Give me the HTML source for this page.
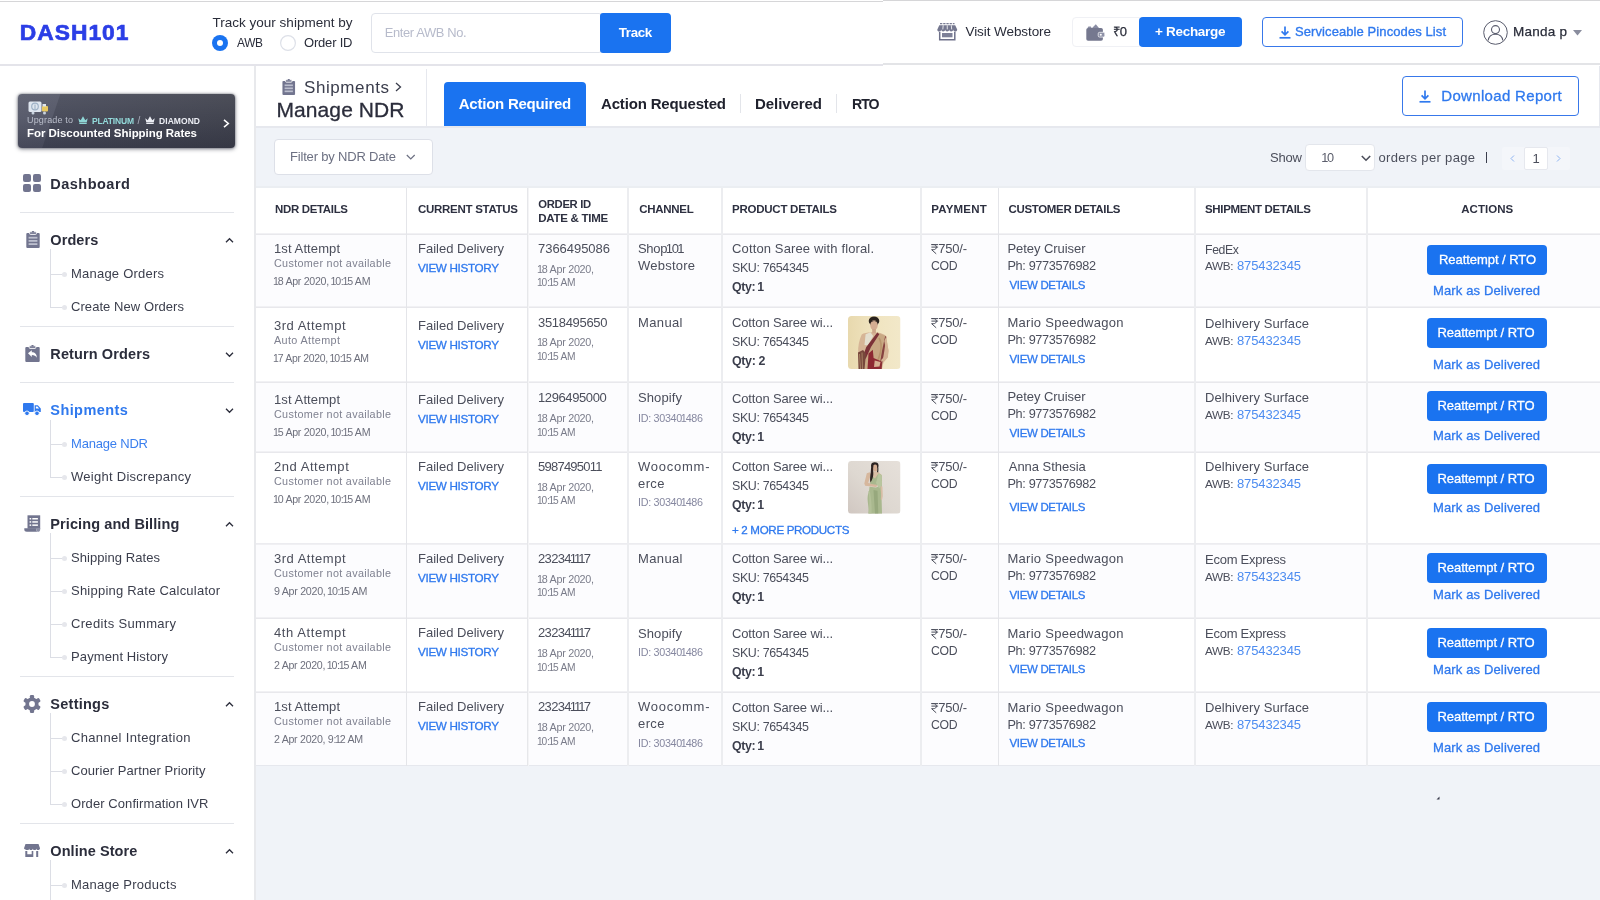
<!DOCTYPE html>
<html><head><meta charset="utf-8"><title>Dash101 - Manage NDR</title>
<style>
*{margin:0;padding:0;box-sizing:border-box}
html,body{width:1600px;height:900px;overflow:hidden;background:#fff;font-family:"Liberation Sans",sans-serif;}
#root{will-change:transform;position:relative;width:1600px;height:900px;overflow:hidden;background:#fff}
.t{position:absolute;white-space:nowrap;display:block}
.b{position:absolute}
.t i{font-style:normal;margin:0 -.08em 0 -.1em}
svg{position:absolute;overflow:visible}
</style></head><body><div id="root">
<div class="b" style="left:256px;top:127px;width:1344px;height:773px;background:#f0f3f8;"></div>
<div class="b" style="left:256px;top:66px;width:1344px;height:60px;background:#fff;"></div>
<div class="b" style="left:256px;top:126px;width:1344px;height:2px;background:#e6e8ee;"></div>
<div class="b" style="left:254px;top:66px;width:2px;height:834px;background:#e8e9ec;"></div>
<div class="b" style="left:1599px;top:66px;width:1px;height:61px;background:#e6e8ee;"></div>
<div class="b" style="left:0px;top:1px;width:883px;height:1px;background:#d6d6d8;"></div>
<div class="b" style="left:883px;top:0px;width:717px;height:1px;background:#d6d6d8;"></div>
<div class="b" style="left:0px;top:64px;width:883px;height:2px;background:#e4e4ea;"></div>
<div class="b" style="left:883px;top:63px;width:717px;height:2px;background:#e3e4e7;"></div>
<span class="t" style="left:19.80px;top:19.30px;font-size:22.8px;line-height:27px;color:#2b3ee6;font-weight:700;letter-spacing:1.009px;-webkit-text-stroke:0.7px #2b3ee6;">DASH101</span>
<span class="t" style="left:212.50px;top:14.80px;font-size:13.5px;line-height:16px;color:#2a2d3a;letter-spacing:0.009px;">Track your shipment by</span>
<svg style="left:212px;top:35px" width="16" height="16"><circle cx="8" cy="8" r="8" fill="#1a73f0"/><circle cx="8" cy="8" r="3" fill="#fff"/></svg>
<svg style="left:280px;top:35px" width="16" height="16"><circle cx="8" cy="8" r="7.4" fill="#fff" stroke="#dde0e8" stroke-width="1.2"/></svg>
<span class="t" style="left:237.00px;top:34.80px;font-size:11.9px;line-height:16px;color:#2a2d3a;letter-spacing:-0.333px;">AWB</span>
<span class="t" style="left:304.00px;top:34.80px;font-size:13px;line-height:16px;color:#2a2d3a;letter-spacing:-0.192px;">Order ID</span>
<div class="b" style="left:371px;top:13px;width:232px;height:40px;background:#fff;border:1px solid #e0e3ea;border-radius:4px;"></div>
<span class="t" style="left:384.70px;top:24.80px;font-size:12.91px;line-height:16px;color:#b7bbcb;letter-spacing:-0.361px;">Enter AWB No.</span>
<div class="b" style="left:600px;top:13px;width:71px;height:40px;background:#1a73f0;border-radius:3px 4px 4px 3px;"></div>
<span class="t" style="left:618.75px;top:24.60px;font-size:13.39px;line-height:16px;color:#fff;font-weight:700;letter-spacing:-0.373px;">Track</span>
<svg style="left:937px;top:22.500px" width="20.500" height="17.500" viewBox="0 0 20.500 17.500">
<path d="M3 0.700h14.500" stroke="#7a7d94" stroke-width="1.200" stroke-dasharray="2.300 .9"/>
<path d="M2.300 2.300h15.900l2 4.100c0 1.300-.9 2.100-2 2.100s-2-.8-2-2c0 1.200-.9 2-2 2s-2-.8-2-2c0 1.200-.9 2-2 2s-2-.8-2-2c0 1.200-.9 2-2 2s-2-.8-2-2c0 1.200-.9 2-2 2S.3 7.700.3 6.400z" fill="#74778f"/>
<path d="M6.200 2.300l-.4 4.100M10.250 2.300v4.100M14.300 2.300l.4 4.100" stroke="#fff" stroke-width=".8"/>
<path d="M2.700 8.800v7.900h15.100V8.800" fill="none" stroke="#6e718a" stroke-width="1.500"/>
<rect x="5" y="10" width="10.500" height="4.300" fill="#7d8097"/>
</svg>
<span class="t" style="left:965.50px;top:23.80px;font-size:13.5px;line-height:16px;color:#2a2d3a;letter-spacing:-0.080px;">Visit Webstore</span>
<div class="b" style="left:1072px;top:17px;width:68px;height:30px;background:#fff;border:1px solid #f0f1f5;border-radius:4px 0 0 4px;"></div>
<svg style="left:1085.500px;top:23.500px" width="19" height="17" viewBox="0 0 19 17">
<path d="M1.200 4.600l1.200-2h2.400l1 1.600L9.800 0.300l3.600 4.300z" fill="#8a8da4"/>
<rect x="0.300" y="3.900" width="16.600" height="12.800" rx="1.800" fill="#75788f"/>
<rect x="12.200" y="8.300" width="6.600" height="4.800" rx="1.400" fill="#8f92a8" stroke="#fff" stroke-width=".7"/>
<circle cx="14.800" cy="10.700" r="1" fill="#fff"/>
</svg>
<span class="t" style="left:1113.00px;top:23.80px;font-size:13px;line-height:16px;color:#2a2d3a;-webkit-text-stroke:0.25px #2a2d3a;letter-spacing:-.3px;">₹0</span>
<div class="b" style="left:1139px;top:17px;width:103px;height:30px;background:#1a73f0;border-radius:4px;"></div>
<span class="t" style="left:1155.00px;top:23.60px;font-size:13.5px;line-height:16px;color:#fff;font-weight:700;letter-spacing:-0.296px;">+ Recharge</span>
<div class="b" style="left:1262px;top:17px;width:201px;height:30px;background:#fff;border:1.5px solid #3878ea;border-radius:4px;"></div>
<svg style="left:1279px;top:25.500px" width="12" height="13" viewBox="0 0 12 13"><path d="M6 0.500v8M2.600 5.400L6 8.800l3.400-3.400" fill="none" stroke="#2f79ee" stroke-width="1.700"/><path d="M0.500 11.800h11" stroke="#2f79ee" stroke-width="1.700"/></svg>
<span class="t" style="left:1295.00px;top:23.60px;font-size:13px;line-height:16px;color:#2f79ee;letter-spacing:0.089px;-webkit-text-stroke:0.35px #2f79ee;">Serviceable Pincodes List</span>
<svg style="left:1482.500px;top:19.500px" width="25" height="25" viewBox="0 0 25 25">
<circle cx="12.500" cy="12.500" r="11.800" fill="#fff" stroke="#5a5d6e" stroke-width="1"/>
<circle cx="12.500" cy="9.600" r="4" fill="none" stroke="#5a5d6e" stroke-width="1.100"/>
<path d="M5.200 20.500c.5-4.200 3.500-6.300 7.300-6.300s6.800 2.100 7.300 6.300" fill="none" stroke="#5a5d6e" stroke-width="1.100"/>
</svg>
<span class="t" style="left:1513.00px;top:24.30px;font-size:13.5px;line-height:16px;color:#2a2d3a;letter-spacing:0.244px;-webkit-text-stroke:0.25px #2a2d3a;">Manda p</span>
<svg style="left:1572.500px;top:29.500px" width="9" height="6"><path d="M0 0h9L4.500 5.500z" fill="#8a8d9e"/></svg>
<div class="b" style="left:17.5px;top:94px;width:217.5px;height:53.5px;border-radius:4px;background:linear-gradient(108.600deg,#5a5d6d 0%,#575a6a 17.800%,#4a4d5c 18.200%,#42444f 100%);box-shadow:0 1px 4px rgba(30,32,50,.55),0 0 2px rgba(30,32,50,.5);"></div>
<div class="b" style="left:17.5px;top:94px;width:217.5px;height:53.5px;border-radius:4px;background:linear-gradient(180deg,rgba(255,255,255,.05) 0%,rgba(0,0,0,0) 45%,rgba(20,22,40,.28) 100%);"></div>
<svg style="left:27.500px;top:101px" width="21" height="14" viewBox="0 0 21 14">
<rect x="0.500" y="0.500" width="13" height="10.500" rx="1.500" fill="#dfe6ef"/>
<circle cx="7" cy="5.500" r="3.300" fill="none" stroke="#9fb2c6" stroke-width="1.200"/>
<path d="M7 3.500v4.500" stroke="#9fb2c6" stroke-width="1.100"/>
<rect x="14" y="5" width="6" height="5.500" rx="1" fill="#e8c860"/>
<rect x="14.500" y="3" width="3.500" height="2.500" fill="#dfe6ef"/>
<circle cx="5" cy="12" r="1.500" fill="#c9d3df"/><circle cx="16.500" cy="12" r="1.500" fill="#c9d3df"/>
</svg>
<span class="t" style="left:27.00px;top:115.10px;font-size:9px;line-height:11px;color:#b9bdca;letter-spacing:0.163px;">Upgrade to</span>
<svg style="left:78px;top:116px" width="10" height="8" viewBox="0 0 10 8"><path d="M0.300 2.200l2.400 2L5 0.300l2.300 3.900 2.400-2L8.700 6.500H1.300z" fill="#8fd6d6"/><rect x="1.300" y="7" width="7.400" height="1" fill="#8fd6d6"/></svg>
<span class="t" style="left:92.00px;top:115.80px;font-size:8.5px;line-height:10px;color:#93dada;font-weight:700;letter-spacing:-0.183px;">PLATINUM</span>
<span class="t" style="left:137.50px;top:114.50px;font-size:10px;line-height:12px;color:#a9adbb;">/</span>
<svg style="left:145px;top:116px" width="10" height="8" viewBox="0 0 10 8"><path d="M0.300 2.200l2.400 2L5 0.300l2.300 3.900 2.400-2L8.700 6.500H1.300z" fill="#eceef4"/><rect x="1.300" y="7" width="7.400" height="1" fill="#eceef4"/></svg>
<span class="t" style="left:159.00px;top:115.80px;font-size:8.5px;line-height:10px;color:#eceef4;font-weight:700;letter-spacing:0.065px;">DIAMOND</span>
<span class="t" style="left:27.00px;top:126.30px;font-size:11.5px;line-height:14px;color:#fff;font-weight:700;letter-spacing:-0.044px;">For Discounted Shipping Rates</span>
<svg style="left:223px;top:118.500px" width="7" height="9" viewBox="0 0 7 9"><path d="M1 0.800L5.300 4.500 1 8.200" fill="none" stroke="#fff" stroke-width="1.600"/></svg>
<svg style="left:23px;top:174px" width="18" height="18" viewBox="0 0 18 18"><rect x="0" y="0" width="8" height="8" rx="2" fill="#72758f"/><rect x="10" y="0" width="8" height="8" rx="2" fill="#72758f"/><rect x="0" y="10" width="8" height="8" rx="2" fill="#72758f"/><rect x="10" y="10" width="8" height="8" rx="2" fill="#72758f"/></svg>
<span class="t" style="left:50.30px;top:175.50px;font-size:14.5px;line-height:17px;color:#2b2d3b;font-weight:700;letter-spacing:0.483px;">Dashboard</span>
<div class="b" style="left:20px;top:212px;width:214px;height:1px;background:#e3e5ea;"></div>
<svg style="left:25.500px;top:231px" width="14" height="17" viewBox="0 0 14 17">
<rect x="0.300" y="2" width="13.400" height="15" rx="1" fill="#72758f"/>
<rect x="3.600" y="0.800" width="6.800" height="2.600" rx=".8" fill="#72758f" stroke="#fff" stroke-width=".9"/>
<rect x="5.800" y="0" width="2.400" height="1.500" rx=".7" fill="#72758f"/>
<rect x="2.600" y="5.800" width="8.800" height="1.800" fill="#bcbfce"/><rect x="2.600" y="9" width="8.800" height="1.800" fill="#bcbfce"/><rect x="2.600" y="12.200" width="8.800" height="1.800" fill="#bcbfce"/>
</svg>
<span class="t" style="left:50.30px;top:231.50px;font-size:14.5px;line-height:17px;color:#2b2d3b;font-weight:700;letter-spacing:0.090px;">Orders</span>
<svg style="left:224.700px;top:236.5px" width="9" height="7" viewBox="0 0 8.600 7"><path d="M0.800 5.200L4.300 1.700 7.800 5.200" fill="none" stroke="#2b2d3b" stroke-width="1.300"/></svg>
<div class="b" style="left:50px;top:249px;width:1px;height:58px;background:#dcdee5;"></div>
<div class="b" style="left:50px;top:273.5px;width:12px;height:1px;background:#dcdee5;"></div>
<div class="b" style="left:62px;top:271.5px;width:5px;height:5px;background:#e6e7ec;border-radius:50%;"></div>
<div class="b" style="left:50px;top:306.5px;width:12px;height:1px;background:#dcdee5;"></div>
<div class="b" style="left:62px;top:304.5px;width:5px;height:5px;background:#e6e7ec;border-radius:50%;"></div>
<span class="t" style="left:71.00px;top:266.00px;font-size:13px;line-height:16px;color:#3b3e4c;letter-spacing:0.223px;">Manage Orders</span>
<span class="t" style="left:71.00px;top:299.00px;font-size:13px;line-height:16px;color:#3b3e4c;letter-spacing:0.064px;">Create New Orders</span>
<div class="b" style="left:20px;top:326px;width:214px;height:1px;background:#e3e5ea;"></div>
<svg style="left:25px;top:345px" width="15" height="17" viewBox="0 0 15 17">
<rect x="0.300" y="2" width="14.400" height="15" rx="1" fill="#72758f"/>
<rect x="4.200" y="0.800" width="6.600" height="2.600" rx=".8" fill="#72758f" stroke="#fff" stroke-width=".9"/>
<rect x="6.300" y="0" width="2.400" height="1.500" rx=".7" fill="#72758f"/>
<path d="M3 8.300L6.800 5.200v2c3.300 0 5 1.800 5 5.600-1-2.100-2.500-2.900-5-2.900v2z" fill="#fff"/>
</svg>
<span class="t" style="left:50.30px;top:345.50px;font-size:14.5px;line-height:17px;color:#2b2d3b;font-weight:700;letter-spacing:0.117px;">Return Orders</span>
<svg style="left:224.700px;top:350.5px" width="9" height="7" viewBox="0 0 8.600 7"><path d="M0.800 1.800L4.300 5.300 7.800 1.800" fill="none" stroke="#2b2d3b" stroke-width="1.300"/></svg>
<div class="b" style="left:20px;top:382px;width:214px;height:1px;background:#e3e5ea;"></div>
<svg style="left:23px;top:403px" width="18" height="13" viewBox="0 0 18 13">
<rect x="0" y="0" width="10.800" height="9" rx="1" fill="#2f79ee"/>
<path d="M11.600 2.200h3.200l3 3.300v3.500h-6.200z" fill="#2f79ee"/>
<path d="M12.900 3.400h1.500l1.700 2h-3.200z" fill="#fff"/>
<circle cx="4" cy="10.300" r="2.300" fill="#2f79ee" stroke="#fff" stroke-width=".9"/>
<circle cx="14" cy="10.300" r="2.300" fill="#2f79ee" stroke="#fff" stroke-width=".9"/>
</svg>
<span class="t" style="left:50.30px;top:401.50px;font-size:14.5px;line-height:17px;color:#2f79ee;font-weight:700;letter-spacing:0.422px;">Shipments</span>
<svg style="left:224.700px;top:406.5px" width="9" height="7" viewBox="0 0 8.600 7"><path d="M0.800 1.800L4.300 5.300 7.800 1.800" fill="none" stroke="#2b2d3b" stroke-width="1.300"/></svg>
<div class="b" style="left:50px;top:420px;width:1px;height:57px;background:#dcdee5;"></div>
<div class="b" style="left:50px;top:443.5px;width:12px;height:1px;background:#dcdee5;"></div>
<div class="b" style="left:62px;top:441.5px;width:5px;height:5px;background:#e6e7ec;border-radius:50%;"></div>
<div class="b" style="left:50px;top:476.5px;width:12px;height:1px;background:#dcdee5;"></div>
<div class="b" style="left:62px;top:474.5px;width:5px;height:5px;background:#e6e7ec;border-radius:50%;"></div>
<span class="t" style="left:71.00px;top:436.00px;font-size:13px;line-height:16px;color:#3a7fee;letter-spacing:-0.195px;">Manage NDR</span>
<span class="t" style="left:71.00px;top:469.00px;font-size:13px;line-height:16px;color:#3b3e4c;letter-spacing:0.273px;">Weight Discrepancy</span>
<div class="b" style="left:20px;top:496px;width:214px;height:1px;background:#e3e5ea;"></div>
<svg style="left:23.500px;top:515px" width="17" height="17" viewBox="0 0 17 17">
<path d="M3.500 0.300h12.700v13.400H3.500z" fill="#72758f"/>
<path d="M0.300 13.200h12v1.500c0 1.200.7 2 1.700 2H2.800c-1.500 0-2.500-1-2.500-2.300z" fill="#72758f"/>
<path d="M12.300 13.200v1.500c0 1.200.7 2 1.700 2 1.200 0 2.200-.9 2.200-2.300V13" fill="#8b8ea5"/>
<rect x="5.600" y="3" width="1.600" height="1.500" fill="#fff"/><rect x="8.300" y="3" width="5.600" height="1.500" fill="#fff"/>
<rect x="5.600" y="6.200" width="1.600" height="1.500" fill="#fff"/><rect x="8.300" y="6.200" width="5.600" height="1.500" fill="#fff"/>
<rect x="5.600" y="9.400" width="1.600" height="1.500" fill="#fff"/><rect x="8.300" y="9.400" width="5.600" height="1.500" fill="#fff"/>
</svg>
<span class="t" style="left:50.30px;top:515.50px;font-size:14.5px;line-height:17px;color:#2b2d3b;font-weight:700;letter-spacing:0.095px;">Pricing and Billing</span>
<svg style="left:224.700px;top:520.5px" width="9" height="7" viewBox="0 0 8.600 7"><path d="M0.800 5.200L4.300 1.700 7.800 5.200" fill="none" stroke="#2b2d3b" stroke-width="1.300"/></svg>
<div class="b" style="left:50px;top:533px;width:1px;height:124px;background:#dcdee5;"></div>
<div class="b" style="left:50px;top:557.5px;width:12px;height:1px;background:#dcdee5;"></div>
<div class="b" style="left:62px;top:555.5px;width:5px;height:5px;background:#e6e7ec;border-radius:50%;"></div>
<div class="b" style="left:50px;top:590.5px;width:12px;height:1px;background:#dcdee5;"></div>
<div class="b" style="left:62px;top:588.5px;width:5px;height:5px;background:#e6e7ec;border-radius:50%;"></div>
<div class="b" style="left:50px;top:623.5px;width:12px;height:1px;background:#dcdee5;"></div>
<div class="b" style="left:62px;top:621.5px;width:5px;height:5px;background:#e6e7ec;border-radius:50%;"></div>
<div class="b" style="left:50px;top:656.5px;width:12px;height:1px;background:#dcdee5;"></div>
<div class="b" style="left:62px;top:654.5px;width:5px;height:5px;background:#e6e7ec;border-radius:50%;"></div>
<span class="t" style="left:71.00px;top:550.00px;font-size:13px;line-height:16px;color:#3b3e4c;letter-spacing:0.064px;">Shipping Rates</span>
<span class="t" style="left:71.00px;top:583.00px;font-size:13px;line-height:16px;color:#3b3e4c;letter-spacing:0.226px;">Shipping Rate Calculator</span>
<span class="t" style="left:71.00px;top:616.00px;font-size:13px;line-height:16px;color:#3b3e4c;letter-spacing:0.328px;">Credits Summary</span>
<span class="t" style="left:71.00px;top:649.00px;font-size:13px;line-height:16px;color:#3b3e4c;letter-spacing:0.117px;">Payment History</span>
<div class="b" style="left:20px;top:676px;width:214px;height:1px;background:#e3e5ea;"></div>
<svg style="left:22.500px;top:694.500px" width="18" height="18" viewBox="0 0 18 18">
<g fill="#72758f"><circle cx="9" cy="9" r="6.600"/>
<g id="tooth"><rect x="6.900" y="0" width="4.200" height="18" rx="1.200"/></g>
<rect x="6.900" y="0" width="4.200" height="18" rx="1.200" transform="rotate(60 9 9)"/>
<rect x="6.900" y="0" width="4.200" height="18" rx="1.200" transform="rotate(120 9 9)"/></g>
<circle cx="9" cy="9" r="2.900" fill="#fff"/></svg>
<span class="t" style="left:50.30px;top:695.50px;font-size:14.5px;line-height:17px;color:#2b2d3b;font-weight:700;letter-spacing:0.257px;">Settings</span>
<svg style="left:224.700px;top:700.5px" width="9" height="7" viewBox="0 0 8.600 7"><path d="M0.800 5.200L4.300 1.700 7.800 5.200" fill="none" stroke="#2b2d3b" stroke-width="1.300"/></svg>
<div class="b" style="left:50px;top:713px;width:1px;height:91px;background:#dcdee5;"></div>
<div class="b" style="left:50px;top:737.5px;width:12px;height:1px;background:#dcdee5;"></div>
<div class="b" style="left:62px;top:735.5px;width:5px;height:5px;background:#e6e7ec;border-radius:50%;"></div>
<div class="b" style="left:50px;top:770.5px;width:12px;height:1px;background:#dcdee5;"></div>
<div class="b" style="left:62px;top:768.5px;width:5px;height:5px;background:#e6e7ec;border-radius:50%;"></div>
<div class="b" style="left:50px;top:803.5px;width:12px;height:1px;background:#dcdee5;"></div>
<div class="b" style="left:62px;top:801.5px;width:5px;height:5px;background:#e6e7ec;border-radius:50%;"></div>
<span class="t" style="left:71.00px;top:730.00px;font-size:13px;line-height:16px;color:#3b3e4c;letter-spacing:0.335px;">Channel Integration</span>
<span class="t" style="left:71.00px;top:763.00px;font-size:13px;line-height:16px;color:#3b3e4c;letter-spacing:0.068px;">Courier Partner Priority</span>
<span class="t" style="left:71.00px;top:796.00px;font-size:13px;line-height:16px;color:#3b3e4c;letter-spacing:0.080px;">Order Confirmation IVR</span>
<div class="b" style="left:20px;top:823px;width:214px;height:1px;background:#e3e5ea;"></div>
<svg style="left:24px;top:843.500px" width="16" height="13" viewBox="0 0 16 13">
<path d="M1.500 0h13l1.500 4.300c0 1.100-.8 1.800-1.800 1.800s-1.800-.7-1.800-1.700c0 1-.8 1.700-1.800 1.700S8.800 5.400 8.800 4.400c0 1-.8 1.700-1.800 1.700s-1.800-.7-1.800-1.700c0 1-.8 1.700-1.800 1.700S0 5.400 0 4.300z" fill="#72758f"/>
<path d="M1.300 7h2v3.300h4.400V7h1.600v6H1.300zM12.200 7h2v6h-2z" fill="#72758f"/>
</svg>
<span class="t" style="left:50.30px;top:842.50px;font-size:14.5px;line-height:17px;color:#2b2d3b;font-weight:700;letter-spacing:0.072px;">Online Store</span>
<svg style="left:224.700px;top:847.5px" width="9" height="7" viewBox="0 0 8.600 7"><path d="M0.800 5.200L4.300 1.700 7.800 5.200" fill="none" stroke="#2b2d3b" stroke-width="1.300"/></svg>
<div class="b" style="left:50px;top:860px;width:1px;height:60.5px;background:#dcdee5;"></div>
<div class="b" style="left:50px;top:884.5px;width:12px;height:1px;background:#dcdee5;"></div>
<div class="b" style="left:62px;top:882.5px;width:5px;height:5px;background:#e6e7ec;border-radius:50%;"></div>
<div class="b" style="left:50px;top:920px;width:12px;height:1px;background:#dcdee5;"></div>
<div class="b" style="left:62px;top:918px;width:5px;height:5px;background:#e6e7ec;border-radius:50%;"></div>
<span class="t" style="left:71.00px;top:877.00px;font-size:13px;line-height:16px;color:#3b3e4c;letter-spacing:0.250px;">Manage Products</span>
<svg style="left:281.500px;top:78.500px" width="13.500" height="16" viewBox="0 0 14 17">
<rect x="0.300" y="2" width="13.400" height="15" rx="1" fill="#72758f"/>
<rect x="3.600" y="0.800" width="6.800" height="2.600" rx=".8" fill="#72758f" stroke="#fff" stroke-width=".9"/>
<rect x="5.800" y="0" width="2.400" height="1.500" rx=".7" fill="#72758f"/>
<rect x="2.600" y="5.800" width="8.800" height="1.800" fill="#bcbfce"/><rect x="2.600" y="9" width="8.800" height="1.800" fill="#bcbfce"/><rect x="2.600" y="12.200" width="8.800" height="1.800" fill="#bcbfce"/>
</svg>
<span class="t" style="left:304.00px;top:77.50px;font-size:17px;line-height:20px;color:#3a3d4c;letter-spacing:0.585px;">Shipments</span>
<svg style="left:395px;top:81.500px" width="7" height="10" viewBox="0 0 7 10"><path d="M1 1l4.500 4L1 9" fill="none" stroke="#3a3d4c" stroke-width="1.300"/></svg>
<span class="t" style="left:276.50px;top:97.30px;font-size:21px;line-height:25px;color:#2b2d3b;letter-spacing:0.086px;-webkit-text-stroke:0.3px #2b2d3b;">Manage NDR</span>
<div class="b" style="left:426px;top:69px;width:1px;height:57px;background:#e6e8ee;"></div>
<div class="b" style="left:444px;top:82px;width:142px;height:44px;background:#1a73f0;border-radius:4px 4px 0 0;"></div>
<span class="t" style="left:458.75px;top:95.20px;font-size:15px;line-height:18px;color:#fff;font-weight:700;letter-spacing:-0.239px;">Action Required</span>
<span class="t" style="left:601.00px;top:95.20px;font-size:15px;line-height:18px;color:#20222e;font-weight:700;letter-spacing:-0.168px;">Action Requested</span>
<div class="b" style="left:740px;top:94px;width:1px;height:19px;background:#e3e5ea;"></div>
<span class="t" style="left:755.00px;top:95.20px;font-size:15px;line-height:18px;color:#20222e;font-weight:700;letter-spacing:-0.067px;">Delivered</span>
<div class="b" style="left:836px;top:94px;width:1px;height:19px;background:#e3e5ea;"></div>
<span class="t" style="left:852.00px;top:95.20px;font-size:14.13px;line-height:18px;color:#20222e;font-weight:700;letter-spacing:-1.036px;">RTO</span>
<div class="b" style="left:1402px;top:76px;width:177px;height:40px;background:#fff;border:1.500px solid #3878ea;border-radius:4px;"></div>
<svg style="left:1419px;top:89.500px" width="12" height="13" viewBox="0 0 12 13"><path d="M6 0.500v8M2.600 5.400L6 8.800l3.400-3.400" fill="none" stroke="#2f79ee" stroke-width="1.700"/><path d="M0.500 11.800h11" stroke="#2f79ee" stroke-width="1.700"/></svg>
<span class="t" style="left:1441.25px;top:87.20px;font-size:15px;line-height:18px;color:#2f79ee;letter-spacing:0.328px;-webkit-text-stroke:0.3px #2f79ee;">Download Report</span>
<div class="b" style="left:274px;top:139px;width:159px;height:36px;background:#fff;border:1px solid #dde0e8;border-radius:4px;"></div>
<span class="t" style="left:290.00px;top:149.00px;font-size:13px;line-height:16px;color:#6c7082;letter-spacing:-0.181px;">Filter by NDR Date</span>
<svg style="left:405.500px;top:153.500px" width="9.500" height="7" viewBox="0 0 9.500 7"><path d="M0.800 1L4.750 5 8.700 1" fill="none" stroke="#6c7082" stroke-width="1.200"/></svg>
<span class="t" style="left:1270.00px;top:150.00px;font-size:13px;line-height:16px;color:#4b4e5b;letter-spacing:-0.173px;">Show</span>
<div class="b" style="left:1305px;top:144px;width:70px;height:27px;background:#fff;border:1px solid #e3e6ec;border-radius:4px;"></div>
<span class="t" style="left:1322.50px;top:150.20px;font-size:12.72px;line-height:16px;color:#5b5e6c;letter-spacing:-0.359px;"><i>1</i>0</span>
<svg style="left:1361px;top:154.500px" width="10" height="7" viewBox="0 0 10 7"><path d="M0.800 1L5 5.200 9.200 1" fill="none" stroke="#4b4e5b" stroke-width="1.600"/></svg>
<span class="t" style="left:1378.50px;top:150.00px;font-size:13px;line-height:16px;color:#4b4e5b;letter-spacing:0.337px;">orders per page</span>
<div class="b" style="left:1486px;top:152px;width:1px;height:11px;background:#3a3d4c;"></div>
<div class="b" style="left:1502px;top:147px;width:68px;height:22.5px;background:#f4f6fa;border-radius:2px;"></div>
<div class="b" style="left:1524px;top:147px;width:24px;height:22.5px;background:#fff;border:1px solid #e6e8ee;border-radius:2px;"></div>
<svg style="left:1510px;top:154.500px" width="5" height="7" viewBox="0 0 5 7"><path d="M4 0.500L1 3.500l3 3" fill="none" stroke="#8db4f3" stroke-width="1"/></svg>
<svg style="left:1556px;top:154.500px" width="5" height="7" viewBox="0 0 5 7"><path d="M1 0.500l3 3-3 3" fill="none" stroke="#8db4f3" stroke-width="1"/></svg>
<span class="t" style="left:1536.00px;top:151.00px;font-size:13px;line-height:16px;color:#4b4e5b;transform:translateX(-50%);">1</span>
<div class="b" style="left:256px;top:188px;width:1344px;height:578px;background:#fff;"></div>
<div class="b" style="left:256px;top:234px;width:1344px;height:73px;background:#fcfcfe;"></div>
<div class="b" style="left:256px;top:382px;width:1344px;height:70px;background:#fcfcfe;"></div>
<div class="b" style="left:256px;top:543.5px;width:1344px;height:74.5px;background:#fcfcfe;"></div>
<div class="b" style="left:256px;top:692px;width:1344px;height:73.5px;background:#fcfcfe;"></div>
<div class="b" style="left:256px;top:186px;width:1344px;height:2px;background:#ebeef2;"></div>
<div class="b" style="left:256px;top:233px;width:1344px;height:1px;background:#f1f1f4;"></div>
<div class="b" style="left:256px;top:234px;width:1344px;height:1px;background:#e8e8ec;"></div>
<div class="b" style="left:256px;top:306px;width:1344px;height:1px;background:#f1f1f4;"></div>
<div class="b" style="left:256px;top:307px;width:1344px;height:1px;background:#e8e8ec;"></div>
<div class="b" style="left:256px;top:381px;width:1344px;height:1px;background:#f1f1f4;"></div>
<div class="b" style="left:256px;top:382px;width:1344px;height:1px;background:#e8e8ec;"></div>
<div class="b" style="left:256px;top:451px;width:1344px;height:1px;background:#f1f1f4;"></div>
<div class="b" style="left:256px;top:452px;width:1344px;height:1px;background:#e8e8ec;"></div>
<div class="b" style="left:256px;top:543px;width:1344px;height:1px;background:#ececf0;"></div>
<div class="b" style="left:256px;top:544px;width:1344px;height:1px;background:#f0f0f3;"></div>
<div class="b" style="left:256px;top:617px;width:1344px;height:1px;background:#f1f1f4;"></div>
<div class="b" style="left:256px;top:618px;width:1344px;height:1px;background:#e8e8ec;"></div>
<div class="b" style="left:256px;top:691px;width:1344px;height:1px;background:#f1f1f4;"></div>
<div class="b" style="left:256px;top:692px;width:1344px;height:1px;background:#e8e8ec;"></div>
<div class="b" style="left:256px;top:765px;width:1344px;height:1px;background:#e6e8ee;"></div>
<div class="b" style="left:406px;top:188px;width:1px;height:578px;background:#e4e5e9;"></div>
<div class="b" style="left:998px;top:188px;width:1px;height:578px;background:#e4e5e9;"></div>
<div class="b" style="left:527px;top:188px;width:1px;height:578px;background:#e6e7ea;"></div>
<div class="b" style="left:528px;top:188px;width:1px;height:578px;background:#f4f4f6;"></div>
<div class="b" style="left:627px;top:188px;width:2px;height:578px;background:#ecedf0;"></div>
<div class="b" style="left:721px;top:188px;width:2px;height:578px;background:#ecedf0;"></div>
<div class="b" style="left:920px;top:188px;width:2px;height:578px;background:#ecedf0;"></div>
<div class="b" style="left:1194px;top:188px;width:2px;height:578px;background:#ecedf0;"></div>
<div class="b" style="left:1366px;top:188px;width:2px;height:578px;background:#ecedf0;"></div>
<span class="t" style="left:275.00px;top:202.00px;font-size:11.46px;line-height:14px;color:#2d3040;font-weight:700;letter-spacing:-0.319px;">NDR DETAILS</span>
<span class="t" style="left:418.00px;top:202.00px;font-size:11.5px;line-height:14px;color:#2d3040;font-weight:700;letter-spacing:-0.285px;">CURRENT STATUS</span>
<span class="t" style="left:538.25px;top:196.75px;font-size:11.29px;line-height:14px;color:#2d3040;font-weight:700;letter-spacing:-0.314px;">ORDER ID</span>
<span class="t" style="left:538.25px;top:210.50px;font-size:11.5px;line-height:14px;color:#2d3040;font-weight:700;letter-spacing:-0.262px;">DATE &amp; TIME</span>
<span class="t" style="left:639.25px;top:202.00px;font-size:11.5px;line-height:14px;color:#2d3040;font-weight:700;letter-spacing:-0.287px;">CHANNEL</span>
<span class="t" style="left:732.00px;top:202.00px;font-size:11.5px;line-height:14px;color:#2d3040;font-weight:700;letter-spacing:-0.243px;">PRODUCT DETAILS</span>
<span class="t" style="left:931.25px;top:202.00px;font-size:11.5px;line-height:14px;color:#2d3040;font-weight:700;letter-spacing:0.197px;">PAYMENT</span>
<span class="t" style="left:1008.50px;top:202.00px;font-size:11.47px;line-height:14px;color:#2d3040;font-weight:700;letter-spacing:-0.322px;">CUSTOMER DETAILS</span>
<span class="t" style="left:1205.00px;top:202.00px;font-size:11.49px;line-height:14px;color:#2d3040;font-weight:700;letter-spacing:-0.324px;">SHIPMENT DETAILS</span>
<span class="t" style="left:1461.25px;top:202.00px;font-size:11.5px;line-height:14px;color:#2d3040;font-weight:700;letter-spacing:0.042px;">ACTIONS</span>
<span class="t" style="left:274.00px;top:240.75px;font-size:13px;line-height:16px;color:#4b4e5b;letter-spacing:0.097px;">1st Attempt</span>
<span class="t" style="left:274.00px;top:257.25px;font-size:10.8px;line-height:13px;color:#7f8190;letter-spacing:0.311px;">Customer not available</span>
<span class="t" style="left:274.00px;top:275.25px;font-size:10.63px;line-height:13px;color:#6e707d;letter-spacing:-0.296px;"><i>1</i>8 Apr 2020, <i>1</i>0:<i>1</i>5 AM</span>
<span class="t" style="left:418.00px;top:240.75px;font-size:13px;line-height:16px;color:#4b4e5b;">Failed Delivery</span>
<span class="t" style="left:418.00px;top:260.50px;font-size:11.68px;line-height:14px;color:#2f79ee;letter-spacing:-0.326px;-webkit-text-stroke:0.3px #2f79ee;">VIEW HISTORY</span>
<span class="t" style="left:538.00px;top:240.75px;font-size:13px;line-height:16px;color:#4b4e5b;letter-spacing:-0.034px;">7366495086</span>
<span class="t" style="left:538.00px;top:262.50px;font-size:10.8px;line-height:13px;color:#7a7c8a;letter-spacing:-0.301px;"><i>1</i>8 Apr 2020,</span>
<span class="t" style="left:538.00px;top:276.25px;font-size:10.22px;line-height:13px;color:#7a7c8a;letter-spacing:-0.286px;"><i>1</i>0:<i>1</i>5 AM</span>
<span class="t" style="left:638.00px;top:240.75px;font-size:13px;line-height:16px;color:#4b4e5b;letter-spacing:-0.312px;">Shop<i>1</i>0<i>1</i></span>
<span class="t" style="left:638.00px;top:257.50px;font-size:13px;line-height:16px;color:#4b4e5b;letter-spacing:0.229px;">Webstore</span>
<span class="t" style="left:732.00px;top:240.75px;font-size:13px;line-height:16px;color:#4b4e5b;letter-spacing:0.136px;">Cotton Saree with floral.</span>
<span class="t" style="left:732.00px;top:259.50px;font-size:12.43px;line-height:16px;color:#4b4e5b;letter-spacing:-0.351px;">SKU: 7654345</span>
<span class="t" style="left:732.00px;top:278.75px;font-size:12.33px;line-height:16px;color:#3b3e4c;font-weight:700;letter-spacing:-0.345px;">Qty: <i>1</i></span>
<svg style="left:931px;top:243.85px" width="7.500" height="10" viewBox="0 0 7.500 10"><path d="M0.400 0.600h6.700M0.400 3.100h6.700M0.400 0.600h1.800c2.200 0 3.200 1 3.200 2.500s-1 2.600-3.200 2.600H0.600L5.200 9.800" fill="none" stroke="#4b4e5b" stroke-width="1" stroke-linejoin="round"/></svg>
<span class="t" style="left:938.30px;top:240.75px;font-size:13px;line-height:16px;color:#4b4e5b;letter-spacing:-0.233px;">750/-</span>
<span class="t" style="left:931.00px;top:257.50px;font-size:12.23px;line-height:16px;color:#4b4e5b;letter-spacing:-0.339px;">COD</span>
<span class="t" style="left:1007.50px;top:240.75px;font-size:13px;line-height:16px;color:#4b4e5b;letter-spacing:-0.063px;">Petey Cruiser</span>
<span class="t" style="left:1007.50px;top:257.50px;font-size:12.69px;line-height:16px;color:#4b4e5b;letter-spacing:-0.358px;">Ph: 9773576982</span>
<span class="t" style="left:1009.50px;top:277.50px;font-size:11.48px;line-height:14px;color:#2f79ee;letter-spacing:-0.321px;-webkit-text-stroke:0.3px #2f79ee;">VIEW DETAILS</span>
<span class="t" style="left:1205.00px;top:241.50px;font-size:12.24px;line-height:16px;color:#4b4e5b;letter-spacing:-0.344px;">FedEx</span>
<span class="t" style="left:1205.00px;top:258.25px;font-size:11.71px;line-height:16px;color:#4b4e5b;letter-spacing:-0.331px;">AWB:</span>
<span class="t" style="left:1237.00px;top:258.25px;font-size:13px;line-height:16px;color:#4d8cf0;letter-spacing:-0.134px;">875432345</span>
<div class="b" style="left:1427px;top:245px;width:120px;height:29.8px;background:#1a73f0;border-radius:4px;"></div>
<span class="t" style="left:1439.00px;top:251.80px;font-size:13px;line-height:16px;color:#fff;letter-spacing:-0.056px;-webkit-text-stroke:0.3px #fff;">Reattempt / RTO</span>
<span class="t" style="left:1433.00px;top:282.50px;font-size:13px;line-height:16px;color:#2f79ee;letter-spacing:0.140px;-webkit-text-stroke:0.3px #2f79ee;">Mark as Delivered</span>
<span class="t" style="left:274.00px;top:317.75px;font-size:13px;line-height:16px;color:#4b4e5b;letter-spacing:0.502px;">3rd Attempt</span>
<span class="t" style="left:274.00px;top:334.00px;font-size:10.8px;line-height:13px;color:#7f8190;letter-spacing:0.378px;">Auto Attempt</span>
<span class="t" style="left:274.00px;top:352.00px;font-size:10.47px;line-height:13px;color:#6e707d;letter-spacing:-0.294px;"><i>1</i>7 Apr 2020, <i>1</i>0:<i>1</i>5 AM</span>
<span class="t" style="left:418.00px;top:317.75px;font-size:13px;line-height:16px;color:#4b4e5b;">Failed Delivery</span>
<span class="t" style="left:418.00px;top:337.50px;font-size:11.68px;line-height:14px;color:#2f79ee;letter-spacing:-0.326px;-webkit-text-stroke:0.3px #2f79ee;">VIEW HISTORY</span>
<span class="t" style="left:538.00px;top:314.50px;font-size:13px;line-height:16px;color:#4b4e5b;letter-spacing:-0.311px;">3518495650</span>
<span class="t" style="left:538.00px;top:336.25px;font-size:10.8px;line-height:13px;color:#7a7c8a;letter-spacing:-0.301px;"><i>1</i>8 Apr 2020,</span>
<span class="t" style="left:538.00px;top:350.00px;font-size:10.22px;line-height:13px;color:#7a7c8a;letter-spacing:-0.286px;"><i>1</i>0:<i>1</i>5 AM</span>
<span class="t" style="left:638.00px;top:314.50px;font-size:13px;line-height:16px;color:#4b4e5b;letter-spacing:0.372px;">Manual</span>
<span class="t" style="left:732.00px;top:314.50px;font-size:13px;line-height:16px;color:#4b4e5b;letter-spacing:-0.137px;">Cotton Saree wi...</span>
<span class="t" style="left:732.00px;top:333.75px;font-size:12.43px;line-height:16px;color:#4b4e5b;letter-spacing:-0.351px;">SKU: 7654345</span>
<span class="t" style="left:732.00px;top:352.75px;font-size:12.43px;line-height:16px;color:#3b3e4c;font-weight:700;letter-spacing:-0.345px;">Qty: 2</span>
<svg style="left:931px;top:317.6px" width="7.500" height="10" viewBox="0 0 7.500 10"><path d="M0.400 0.600h6.700M0.400 3.100h6.700M0.400 0.600h1.800c2.200 0 3.200 1 3.200 2.500s-1 2.600-3.200 2.600H0.600L5.200 9.800" fill="none" stroke="#4b4e5b" stroke-width="1" stroke-linejoin="round"/></svg>
<span class="t" style="left:938.30px;top:314.50px;font-size:13px;line-height:16px;color:#4b4e5b;letter-spacing:-0.233px;">750/-</span>
<span class="t" style="left:931.00px;top:331.50px;font-size:12.23px;line-height:16px;color:#4b4e5b;letter-spacing:-0.339px;">COD</span>
<span class="t" style="left:1007.50px;top:314.50px;font-size:13px;line-height:16px;color:#4b4e5b;letter-spacing:0.265px;">Mario Speedwagon</span>
<span class="t" style="left:1007.50px;top:331.50px;font-size:12.69px;line-height:16px;color:#4b4e5b;letter-spacing:-0.358px;">Ph: 9773576982</span>
<span class="t" style="left:1009.50px;top:351.50px;font-size:11.48px;line-height:14px;color:#2f79ee;letter-spacing:-0.321px;-webkit-text-stroke:0.3px #2f79ee;">VIEW DETAILS</span>
<span class="t" style="left:1205.00px;top:315.75px;font-size:13px;line-height:16px;color:#4b4e5b;letter-spacing:0.087px;">Delhivery Surface</span>
<span class="t" style="left:1205.00px;top:332.50px;font-size:11.71px;line-height:16px;color:#4b4e5b;letter-spacing:-0.331px;">AWB:</span>
<span class="t" style="left:1237.00px;top:332.50px;font-size:13px;line-height:16px;color:#4d8cf0;letter-spacing:-0.134px;">875432345</span>
<div class="b" style="left:1427px;top:318px;width:120px;height:29.8px;background:#1a73f0;border-radius:4px;"></div>
<span class="t" style="left:1437.50px;top:324.80px;font-size:13px;line-height:16px;color:#fff;letter-spacing:-0.056px;-webkit-text-stroke:0.3px #fff;">Reattempt / RTO</span>
<span class="t" style="left:1433.00px;top:356.50px;font-size:13px;line-height:16px;color:#2f79ee;letter-spacing:0.140px;-webkit-text-stroke:0.3px #2f79ee;">Mark as Delivered</span>
<span class="t" style="left:274.00px;top:391.50px;font-size:13px;line-height:16px;color:#4b4e5b;letter-spacing:0.097px;">1st Attempt</span>
<span class="t" style="left:274.00px;top:407.50px;font-size:10.8px;line-height:13px;color:#7f8190;letter-spacing:0.311px;">Customer not available</span>
<span class="t" style="left:274.00px;top:426.00px;font-size:10.63px;line-height:13px;color:#6e707d;letter-spacing:-0.296px;"><i>1</i>5 Apr 2020, <i>1</i>0:<i>1</i>5 AM</span>
<span class="t" style="left:418.00px;top:391.50px;font-size:13px;line-height:16px;color:#4b4e5b;">Failed Delivery</span>
<span class="t" style="left:418.00px;top:411.50px;font-size:11.68px;line-height:14px;color:#2f79ee;letter-spacing:-0.326px;-webkit-text-stroke:0.3px #2f79ee;">VIEW HISTORY</span>
<span class="t" style="left:538.00px;top:389.50px;font-size:13px;line-height:16px;color:#4b4e5b;letter-spacing:-0.395px;">1296495000</span>
<span class="t" style="left:538.00px;top:412.00px;font-size:10.8px;line-height:13px;color:#7a7c8a;letter-spacing:-0.301px;"><i>1</i>8 Apr 2020,</span>
<span class="t" style="left:538.00px;top:426.00px;font-size:10.22px;line-height:13px;color:#7a7c8a;letter-spacing:-0.286px;"><i>1</i>0:<i>1</i>5 AM</span>
<span class="t" style="left:638.00px;top:389.50px;font-size:13px;line-height:16px;color:#4b4e5b;letter-spacing:0.106px;">Shopify</span>
<span class="t" style="left:638.00px;top:411.75px;font-size:10.75px;line-height:13px;color:#8688a0;letter-spacing:-0.300px;">ID: 30340<i>1</i>486</span>
<span class="t" style="left:732.00px;top:390.75px;font-size:13px;line-height:16px;color:#4b4e5b;letter-spacing:-0.137px;">Cotton Saree wi...</span>
<span class="t" style="left:732.00px;top:409.50px;font-size:12.43px;line-height:16px;color:#4b4e5b;letter-spacing:-0.351px;">SKU: 7654345</span>
<span class="t" style="left:732.00px;top:428.75px;font-size:12.33px;line-height:16px;color:#3b3e4c;font-weight:700;letter-spacing:-0.345px;">Qty: <i>1</i></span>
<svg style="left:931px;top:393.6px" width="7.500" height="10" viewBox="0 0 7.500 10"><path d="M0.400 0.600h6.700M0.400 3.100h6.700M0.400 0.600h1.800c2.200 0 3.200 1 3.200 2.500s-1 2.600-3.200 2.600H0.600L5.200 9.800" fill="none" stroke="#4b4e5b" stroke-width="1" stroke-linejoin="round"/></svg>
<span class="t" style="left:938.30px;top:390.50px;font-size:13px;line-height:16px;color:#4b4e5b;letter-spacing:-0.233px;">750/-</span>
<span class="t" style="left:931.00px;top:407.50px;font-size:12.23px;line-height:16px;color:#4b4e5b;letter-spacing:-0.339px;">COD</span>
<span class="t" style="left:1007.50px;top:388.75px;font-size:13px;line-height:16px;color:#4b4e5b;letter-spacing:-0.063px;">Petey Cruiser</span>
<span class="t" style="left:1007.50px;top:405.75px;font-size:12.69px;line-height:16px;color:#4b4e5b;letter-spacing:-0.358px;">Ph: 9773576982</span>
<span class="t" style="left:1009.50px;top:425.50px;font-size:11.48px;line-height:14px;color:#2f79ee;letter-spacing:-0.321px;-webkit-text-stroke:0.3px #2f79ee;">VIEW DETAILS</span>
<span class="t" style="left:1205.00px;top:389.50px;font-size:13px;line-height:16px;color:#4b4e5b;letter-spacing:0.087px;">Delhivery Surface</span>
<span class="t" style="left:1205.00px;top:406.50px;font-size:11.71px;line-height:16px;color:#4b4e5b;letter-spacing:-0.331px;">AWB:</span>
<span class="t" style="left:1237.00px;top:406.50px;font-size:13px;line-height:16px;color:#4d8cf0;letter-spacing:-0.134px;">875432345</span>
<div class="b" style="left:1427px;top:391px;width:120px;height:29.8px;background:#1a73f0;border-radius:4px;"></div>
<span class="t" style="left:1437.50px;top:397.80px;font-size:13px;line-height:16px;color:#fff;letter-spacing:-0.056px;-webkit-text-stroke:0.3px #fff;">Reattempt / RTO</span>
<span class="t" style="left:1433.00px;top:427.50px;font-size:13px;line-height:16px;color:#2f79ee;letter-spacing:0.140px;-webkit-text-stroke:0.3px #2f79ee;">Mark as Delivered</span>
<span class="t" style="left:274.00px;top:458.75px;font-size:13px;line-height:16px;color:#4b4e5b;letter-spacing:0.537px;">2nd Attempt</span>
<span class="t" style="left:274.00px;top:475.00px;font-size:10.8px;line-height:13px;color:#7f8190;letter-spacing:0.311px;">Customer not available</span>
<span class="t" style="left:274.00px;top:493.00px;font-size:10.63px;line-height:13px;color:#6e707d;letter-spacing:-0.296px;"><i>1</i>0 Apr 2020, <i>1</i>0:<i>1</i>5 AM</span>
<span class="t" style="left:418.00px;top:458.75px;font-size:13px;line-height:16px;color:#4b4e5b;">Failed Delivery</span>
<span class="t" style="left:418.00px;top:478.50px;font-size:11.68px;line-height:14px;color:#2f79ee;letter-spacing:-0.326px;-webkit-text-stroke:0.3px #2f79ee;">VIEW HISTORY</span>
<span class="t" style="left:538.00px;top:458.75px;font-size:13px;line-height:16px;color:#4b4e5b;letter-spacing:-0.760px;">5987495011</span>
<span class="t" style="left:538.00px;top:480.50px;font-size:10.8px;line-height:13px;color:#7a7c8a;letter-spacing:-0.301px;"><i>1</i>8 Apr 2020,</span>
<span class="t" style="left:538.00px;top:494.25px;font-size:10.22px;line-height:13px;color:#7a7c8a;letter-spacing:-0.286px;"><i>1</i>0:<i>1</i>5 AM</span>
<span class="t" style="left:638.00px;top:458.75px;font-size:13px;line-height:16px;color:#4b4e5b;letter-spacing:0.755px;">Woocomm-</span>
<span class="t" style="left:638.00px;top:475.75px;font-size:13px;line-height:16px;color:#4b4e5b;letter-spacing:0.403px;">erce</span>
<span class="t" style="left:638.00px;top:496.00px;font-size:10.75px;line-height:13px;color:#8688a0;letter-spacing:-0.300px;">ID: 30340<i>1</i>486</span>
<span class="t" style="left:732.00px;top:458.75px;font-size:13px;line-height:16px;color:#4b4e5b;letter-spacing:-0.137px;">Cotton Saree wi...</span>
<span class="t" style="left:732.00px;top:477.75px;font-size:12.43px;line-height:16px;color:#4b4e5b;letter-spacing:-0.351px;">SKU: 7654345</span>
<span class="t" style="left:732.00px;top:497.00px;font-size:12.33px;line-height:16px;color:#3b3e4c;font-weight:700;letter-spacing:-0.345px;">Qty: <i>1</i></span>
<svg style="left:931px;top:461.85px" width="7.500" height="10" viewBox="0 0 7.500 10"><path d="M0.400 0.600h6.700M0.400 3.100h6.700M0.400 0.600h1.800c2.200 0 3.200 1 3.200 2.500s-1 2.600-3.200 2.600H0.600L5.200 9.800" fill="none" stroke="#4b4e5b" stroke-width="1" stroke-linejoin="round"/></svg>
<span class="t" style="left:938.30px;top:458.75px;font-size:13px;line-height:16px;color:#4b4e5b;letter-spacing:-0.233px;">750/-</span>
<span class="t" style="left:931.00px;top:475.75px;font-size:12.23px;line-height:16px;color:#4b4e5b;letter-spacing:-0.339px;">COD</span>
<span class="t" style="left:1008.75px;top:458.75px;font-size:13px;line-height:16px;color:#4b4e5b;letter-spacing:-0.031px;">Anna Sthesia</span>
<span class="t" style="left:1007.50px;top:475.75px;font-size:12.69px;line-height:16px;color:#4b4e5b;letter-spacing:-0.358px;">Ph: 9773576982</span>
<span class="t" style="left:1009.50px;top:499.75px;font-size:11.48px;line-height:14px;color:#2f79ee;letter-spacing:-0.321px;-webkit-text-stroke:0.3px #2f79ee;">VIEW DETAILS</span>
<span class="t" style="left:1205.00px;top:458.75px;font-size:13px;line-height:16px;color:#4b4e5b;letter-spacing:0.087px;">Delhivery Surface</span>
<span class="t" style="left:1205.00px;top:475.75px;font-size:11.71px;line-height:16px;color:#4b4e5b;letter-spacing:-0.331px;">AWB:</span>
<span class="t" style="left:1237.00px;top:475.75px;font-size:13px;line-height:16px;color:#4d8cf0;letter-spacing:-0.134px;">875432345</span>
<div class="b" style="left:1427px;top:464px;width:120px;height:29.8px;background:#1a73f0;border-radius:4px;"></div>
<span class="t" style="left:1437.50px;top:470.80px;font-size:13px;line-height:16px;color:#fff;letter-spacing:-0.056px;-webkit-text-stroke:0.3px #fff;">Reattempt / RTO</span>
<span class="t" style="left:1433.00px;top:499.50px;font-size:13px;line-height:16px;color:#2f79ee;letter-spacing:0.140px;-webkit-text-stroke:0.3px #2f79ee;">Mark as Delivered</span>
<span class="t" style="left:732.00px;top:522.50px;font-size:11.59px;line-height:14px;color:#2f79ee;letter-spacing:-0.324px;-webkit-text-stroke:0.3px #2f79ee;">+ 2 MORE PRODUCTS</span>
<span class="t" style="left:274.00px;top:550.75px;font-size:13px;line-height:16px;color:#4b4e5b;letter-spacing:0.502px;">3rd Attempt</span>
<span class="t" style="left:274.00px;top:567.00px;font-size:10.8px;line-height:13px;color:#7f8190;letter-spacing:0.311px;">Customer not available</span>
<span class="t" style="left:274.00px;top:585.00px;font-size:10.71px;line-height:13px;color:#6e707d;letter-spacing:-0.298px;">9 Apr 2020, <i>1</i>0:<i>1</i>5 AM</span>
<span class="t" style="left:418.00px;top:550.75px;font-size:13px;line-height:16px;color:#4b4e5b;">Failed Delivery</span>
<span class="t" style="left:418.00px;top:570.50px;font-size:11.68px;line-height:14px;color:#2f79ee;letter-spacing:-0.326px;-webkit-text-stroke:0.3px #2f79ee;">VIEW HISTORY</span>
<span class="t" style="left:538.00px;top:550.75px;font-size:13px;line-height:16px;color:#4b4e5b;letter-spacing:-0.640px;">23234<i>1</i><i>1</i><i>1</i>7</span>
<span class="t" style="left:538.00px;top:572.50px;font-size:10.8px;line-height:13px;color:#7a7c8a;letter-spacing:-0.301px;"><i>1</i>8 Apr 2020,</span>
<span class="t" style="left:538.00px;top:586.25px;font-size:10.22px;line-height:13px;color:#7a7c8a;letter-spacing:-0.286px;"><i>1</i>0:<i>1</i>5 AM</span>
<span class="t" style="left:638.00px;top:550.75px;font-size:13px;line-height:16px;color:#4b4e5b;letter-spacing:0.372px;">Manual</span>
<span class="t" style="left:732.00px;top:550.75px;font-size:13px;line-height:16px;color:#4b4e5b;letter-spacing:-0.137px;">Cotton Saree wi...</span>
<span class="t" style="left:732.00px;top:569.50px;font-size:12.43px;line-height:16px;color:#4b4e5b;letter-spacing:-0.351px;">SKU: 7654345</span>
<span class="t" style="left:732.00px;top:588.75px;font-size:12.33px;line-height:16px;color:#3b3e4c;font-weight:700;letter-spacing:-0.345px;">Qty: <i>1</i></span>
<svg style="left:931px;top:553.85px" width="7.500" height="10" viewBox="0 0 7.500 10"><path d="M0.400 0.600h6.700M0.400 3.100h6.700M0.400 0.600h1.800c2.200 0 3.200 1 3.200 2.500s-1 2.600-3.200 2.600H0.600L5.200 9.800" fill="none" stroke="#4b4e5b" stroke-width="1" stroke-linejoin="round"/></svg>
<span class="t" style="left:938.30px;top:550.75px;font-size:13px;line-height:16px;color:#4b4e5b;letter-spacing:-0.233px;">750/-</span>
<span class="t" style="left:931.00px;top:567.75px;font-size:12.23px;line-height:16px;color:#4b4e5b;letter-spacing:-0.339px;">COD</span>
<span class="t" style="left:1007.50px;top:550.75px;font-size:13px;line-height:16px;color:#4b4e5b;letter-spacing:0.265px;">Mario Speedwagon</span>
<span class="t" style="left:1007.50px;top:567.75px;font-size:12.69px;line-height:16px;color:#4b4e5b;letter-spacing:-0.358px;">Ph: 9773576982</span>
<span class="t" style="left:1009.50px;top:587.50px;font-size:11.48px;line-height:14px;color:#2f79ee;letter-spacing:-0.321px;-webkit-text-stroke:0.3px #2f79ee;">VIEW DETAILS</span>
<span class="t" style="left:1205.00px;top:551.75px;font-size:13px;line-height:16px;color:#4b4e5b;letter-spacing:-0.255px;">Ecom Express</span>
<span class="t" style="left:1205.00px;top:568.50px;font-size:11.71px;line-height:16px;color:#4b4e5b;letter-spacing:-0.331px;">AWB:</span>
<span class="t" style="left:1237.00px;top:568.50px;font-size:13px;line-height:16px;color:#4d8cf0;letter-spacing:-0.134px;">875432345</span>
<div class="b" style="left:1427px;top:553px;width:120px;height:29.8px;background:#1a73f0;border-radius:4px;"></div>
<span class="t" style="left:1437.50px;top:559.80px;font-size:13px;line-height:16px;color:#fff;letter-spacing:-0.056px;-webkit-text-stroke:0.3px #fff;">Reattempt / RTO</span>
<span class="t" style="left:1433.00px;top:586.50px;font-size:13px;line-height:16px;color:#2f79ee;letter-spacing:0.140px;-webkit-text-stroke:0.3px #2f79ee;">Mark as Delivered</span>
<span class="t" style="left:274.00px;top:624.75px;font-size:13px;line-height:16px;color:#4b4e5b;letter-spacing:0.574px;">4th Attempt</span>
<span class="t" style="left:274.00px;top:641.00px;font-size:10.8px;line-height:13px;color:#7f8190;letter-spacing:0.311px;">Customer not available</span>
<span class="t" style="left:274.00px;top:659.00px;font-size:10.63px;line-height:13px;color:#6e707d;letter-spacing:-0.298px;">2 Apr 2020, <i>1</i>0:<i>1</i>5 AM</span>
<span class="t" style="left:418.00px;top:624.75px;font-size:13px;line-height:16px;color:#4b4e5b;">Failed Delivery</span>
<span class="t" style="left:418.00px;top:644.50px;font-size:11.68px;line-height:14px;color:#2f79ee;letter-spacing:-0.326px;-webkit-text-stroke:0.3px #2f79ee;">VIEW HISTORY</span>
<span class="t" style="left:538.00px;top:624.75px;font-size:13px;line-height:16px;color:#4b4e5b;letter-spacing:-0.640px;">23234<i>1</i><i>1</i><i>1</i>7</span>
<span class="t" style="left:538.00px;top:647.25px;font-size:10.8px;line-height:13px;color:#7a7c8a;letter-spacing:-0.301px;"><i>1</i>8 Apr 2020,</span>
<span class="t" style="left:538.00px;top:661.00px;font-size:10.22px;line-height:13px;color:#7a7c8a;letter-spacing:-0.286px;"><i>1</i>0:<i>1</i>5 AM</span>
<span class="t" style="left:638.00px;top:625.75px;font-size:13px;line-height:16px;color:#4b4e5b;letter-spacing:0.106px;">Shopify</span>
<span class="t" style="left:638.00px;top:646.00px;font-size:10.75px;line-height:13px;color:#8688a0;letter-spacing:-0.300px;">ID: 30340<i>1</i>486</span>
<span class="t" style="left:732.00px;top:625.75px;font-size:13px;line-height:16px;color:#4b4e5b;letter-spacing:-0.137px;">Cotton Saree wi...</span>
<span class="t" style="left:732.00px;top:644.50px;font-size:12.43px;line-height:16px;color:#4b4e5b;letter-spacing:-0.351px;">SKU: 7654345</span>
<span class="t" style="left:732.00px;top:663.75px;font-size:12.33px;line-height:16px;color:#3b3e4c;font-weight:700;letter-spacing:-0.345px;">Qty: <i>1</i></span>
<svg style="left:931px;top:628.6px" width="7.500" height="10" viewBox="0 0 7.500 10"><path d="M0.400 0.600h6.700M0.400 3.100h6.700M0.400 0.600h1.800c2.200 0 3.200 1 3.200 2.500s-1 2.600-3.200 2.600H0.600L5.200 9.800" fill="none" stroke="#4b4e5b" stroke-width="1" stroke-linejoin="round"/></svg>
<span class="t" style="left:938.30px;top:625.50px;font-size:13px;line-height:16px;color:#4b4e5b;letter-spacing:-0.233px;">750/-</span>
<span class="t" style="left:931.00px;top:642.50px;font-size:12.23px;line-height:16px;color:#4b4e5b;letter-spacing:-0.339px;">COD</span>
<span class="t" style="left:1007.50px;top:625.75px;font-size:13px;line-height:16px;color:#4b4e5b;letter-spacing:0.265px;">Mario Speedwagon</span>
<span class="t" style="left:1007.50px;top:642.50px;font-size:12.69px;line-height:16px;color:#4b4e5b;letter-spacing:-0.358px;">Ph: 9773576982</span>
<span class="t" style="left:1009.50px;top:661.75px;font-size:11.48px;line-height:14px;color:#2f79ee;letter-spacing:-0.321px;-webkit-text-stroke:0.3px #2f79ee;">VIEW DETAILS</span>
<span class="t" style="left:1205.00px;top:625.75px;font-size:13px;line-height:16px;color:#4b4e5b;letter-spacing:-0.255px;">Ecom Express</span>
<span class="t" style="left:1205.00px;top:642.50px;font-size:11.71px;line-height:16px;color:#4b4e5b;letter-spacing:-0.331px;">AWB:</span>
<span class="t" style="left:1237.00px;top:642.50px;font-size:13px;line-height:16px;color:#4d8cf0;letter-spacing:-0.134px;">875432345</span>
<div class="b" style="left:1427px;top:628px;width:120px;height:29.8px;background:#1a73f0;border-radius:4px;"></div>
<span class="t" style="left:1437.50px;top:634.80px;font-size:13px;line-height:16px;color:#fff;letter-spacing:-0.056px;-webkit-text-stroke:0.3px #fff;">Reattempt / RTO</span>
<span class="t" style="left:1433.00px;top:662.00px;font-size:13px;line-height:16px;color:#2f79ee;letter-spacing:0.140px;-webkit-text-stroke:0.3px #2f79ee;">Mark as Delivered</span>
<span class="t" style="left:274.00px;top:698.75px;font-size:13px;line-height:16px;color:#4b4e5b;letter-spacing:0.097px;">1st Attempt</span>
<span class="t" style="left:274.00px;top:715.00px;font-size:10.8px;line-height:13px;color:#7f8190;letter-spacing:0.311px;">Customer not available</span>
<span class="t" style="left:274.00px;top:733.00px;font-size:10.65px;line-height:13px;color:#6e707d;letter-spacing:-0.297px;">2 Apr 2020, 9:<i>1</i>2 AM</span>
<span class="t" style="left:418.00px;top:698.75px;font-size:13px;line-height:16px;color:#4b4e5b;">Failed Delivery</span>
<span class="t" style="left:418.00px;top:718.50px;font-size:11.68px;line-height:14px;color:#2f79ee;letter-spacing:-0.326px;-webkit-text-stroke:0.3px #2f79ee;">VIEW HISTORY</span>
<span class="t" style="left:538.00px;top:698.75px;font-size:13px;line-height:16px;color:#4b4e5b;letter-spacing:-0.640px;">23234<i>1</i><i>1</i><i>1</i>7</span>
<span class="t" style="left:538.00px;top:721.00px;font-size:10.8px;line-height:13px;color:#7a7c8a;letter-spacing:-0.301px;"><i>1</i>8 Apr 2020,</span>
<span class="t" style="left:538.00px;top:735.00px;font-size:10.22px;line-height:13px;color:#7a7c8a;letter-spacing:-0.286px;"><i>1</i>0:<i>1</i>5 AM</span>
<span class="t" style="left:638.00px;top:698.75px;font-size:13px;line-height:16px;color:#4b4e5b;letter-spacing:0.755px;">Woocomm-</span>
<span class="t" style="left:638.00px;top:715.75px;font-size:13px;line-height:16px;color:#4b4e5b;letter-spacing:0.403px;">erce</span>
<span class="t" style="left:638.00px;top:737.00px;font-size:10.75px;line-height:13px;color:#8688a0;letter-spacing:-0.300px;">ID: 30340<i>1</i>486</span>
<span class="t" style="left:732.00px;top:699.75px;font-size:13px;line-height:16px;color:#4b4e5b;letter-spacing:-0.137px;">Cotton Saree wi...</span>
<span class="t" style="left:732.00px;top:718.75px;font-size:12.43px;line-height:16px;color:#4b4e5b;letter-spacing:-0.351px;">SKU: 7654345</span>
<span class="t" style="left:732.00px;top:737.75px;font-size:12.33px;line-height:16px;color:#3b3e4c;font-weight:700;letter-spacing:-0.345px;">Qty: <i>1</i></span>
<svg style="left:931px;top:702.6px" width="7.500" height="10" viewBox="0 0 7.500 10"><path d="M0.400 0.600h6.700M0.400 3.100h6.700M0.400 0.600h1.800c2.200 0 3.200 1 3.200 2.500s-1 2.600-3.200 2.600H0.600L5.200 9.800" fill="none" stroke="#4b4e5b" stroke-width="1" stroke-linejoin="round"/></svg>
<span class="t" style="left:938.30px;top:699.50px;font-size:13px;line-height:16px;color:#4b4e5b;letter-spacing:-0.233px;">750/-</span>
<span class="t" style="left:931.00px;top:716.50px;font-size:12.23px;line-height:16px;color:#4b4e5b;letter-spacing:-0.339px;">COD</span>
<span class="t" style="left:1007.50px;top:699.75px;font-size:13px;line-height:16px;color:#4b4e5b;letter-spacing:0.265px;">Mario Speedwagon</span>
<span class="t" style="left:1007.50px;top:716.50px;font-size:12.69px;line-height:16px;color:#4b4e5b;letter-spacing:-0.358px;">Ph: 9773576982</span>
<span class="t" style="left:1009.50px;top:735.50px;font-size:11.48px;line-height:14px;color:#2f79ee;letter-spacing:-0.321px;-webkit-text-stroke:0.3px #2f79ee;">VIEW DETAILS</span>
<span class="t" style="left:1205.00px;top:699.75px;font-size:13px;line-height:16px;color:#4b4e5b;letter-spacing:0.087px;">Delhivery Surface</span>
<span class="t" style="left:1205.00px;top:716.50px;font-size:11.71px;line-height:16px;color:#4b4e5b;letter-spacing:-0.331px;">AWB:</span>
<span class="t" style="left:1237.00px;top:716.50px;font-size:13px;line-height:16px;color:#4d8cf0;letter-spacing:-0.134px;">875432345</span>
<div class="b" style="left:1427px;top:702px;width:120px;height:29.8px;background:#1a73f0;border-radius:4px;"></div>
<span class="t" style="left:1437.50px;top:708.80px;font-size:13px;line-height:16px;color:#fff;letter-spacing:-0.056px;-webkit-text-stroke:0.3px #fff;">Reattempt / RTO</span>
<span class="t" style="left:1433.00px;top:739.50px;font-size:13px;line-height:16px;color:#2f79ee;letter-spacing:0.140px;-webkit-text-stroke:0.3px #2f79ee;">Mark as Delivered</span>
<svg style="left:1436px;top:796px" width="4" height="4"><path d="M3.500 0.500v3h-3z" fill="#3a3d4c"/></svg>
<svg style="left:848px;top:316.200px" width="52.500" height="53" viewBox="0 0 52.500 53">
<defs><clipPath id="c1"><rect width="52.500" height="53" rx="3.500"/></clipPath>
<filter id="bl1" x="-5%" y="-5%" width="110%" height="110%"><feGaussianBlur stdDeviation="0.5"/></filter>
<linearGradient id="g1" x1="0" x2="1"><stop offset="0" stop-color="#e8d9ae"/><stop offset=".5" stop-color="#f0e4c0"/><stop offset="1" stop-color="#f2e8c9"/></linearGradient></defs>
<g clip-path="url(#c1)">
<rect width="52.500" height="53" fill="url(#g1)"/>
<g filter="url(#bl1)">
<path d="M13.700 18.600c2-1.600 5.500-2.300 9.800-2.400l5.500.2c4.500.5 8 1.800 9.300 4.200l2.200 14.500-.6 6.500-4.400 5-1.500 6.500h-20.500l-1.500-14.500-1.800-1.500c-.5-6.500 1-13 3.500-18.500z" fill="#d6b596"/>
<ellipse cx="26" cy="5" rx="5.300" ry="4.500" fill="#2a221f"/>
<ellipse cx="26" cy="9.200" rx="3.700" ry="5" fill="#d4ad92"/>
<path d="M21.900 6.600c1.500-2.600 6.500-2.600 8.200 0-1-.2-2.500-1.700-4-1.700s-3 1.400-4.200 1.700z" fill="#2a221f"/>
<rect x="24.200" y="13" width="3.700" height="4.200" fill="#cda68a"/>
<path d="M17.600 18.200l4.800-1.900 2.800 3.700-5.200 9.500-3.500-.5z" fill="#e4dfcf"/>
<path d="M29.300 16.600l8.400 3.500-1.700 14.500-3.500 18.400h-19l2.500-11 4.500-9z" fill="#c8a883"/>
<path d="M31 22c2 3 2.500 9 1.500 14s-3 9-4 13" fill="none" stroke="#b8946c" stroke-width="1.600"/>
<path d="M29.300 16.600l-11 14.500-3.800 10.400 3.200 1.300 5.300-11.800 8.300-12.700z" fill="#7b3138"/>
<path d="M37.200 19.900l1.100.9-2 14.200-3 18h-2.400l3.300-19z" fill="#86433f"/>
<path d="M20.500 37.500l4.300-3.800.8 8.300 8 3.500v7.500h-14.100z" fill="#8d2b33"/>
<path d="M10 36.500l5-2.500 3 3.500-1.500 15.500h-6z" fill="#77463b"/>
<path d="M11.500 38l1 15M14 36.500l.5 16.500" stroke="#b08f6c" stroke-width=".8"/>
<path d="M26.700 44.500l5.800 1.500-1 4.500-5.500.5z" fill="#d6b092"/>
<path d="M38 21l2.500 13.500-.8 6.300-6 5.200-.6-2 4.400-4.500.3-6.500-1.500-8z" fill="#d6b596"/>
</g></g></svg>
<svg style="left:848px;top:460.500px" width="52.500" height="52.700" viewBox="0 0 52.500 52.700">
<defs><clipPath id="c2"><rect width="52.500" height="52.700" rx="3.500"/></clipPath>
<filter id="bl2" x="-5%" y="-5%" width="110%" height="110%"><feGaussianBlur stdDeviation="0.45"/></filter>
<linearGradient id="g2" x1="0" y1="1" x2="1" y2="0"><stop offset="0" stop-color="#d0c7c1"/><stop offset=".45" stop-color="#ded8d1"/><stop offset="1" stop-color="#e6e0da"/></linearGradient></defs>
<g clip-path="url(#c2)">
<rect width="52.500" height="52.700" fill="url(#g2)"/>
<g filter="url(#bl2)">
<path d="M24.500 10.500h5.500l3.600 3.600v6l-12 2z" fill="#d8bda4"/>
<path d="M18.800 12.300l3-1 1.200 2-2.800 8.600 9 1.600.5 1.600-2 .8-10.500-1.200-.9-2.300z" fill="#d6b79d"/>
<path d="M23.500 14.500l3.500 3 3.500-5 3.100 1.600.2 10.500-.4 6 .6 22.100h-13.800c1-5.500-.4-9.500-.6-14s.8-6.500 1.600-9.500l.3-3.500 6.500.8 2.200-.9-.4-1.500-7.700-1.300z" fill="#a9b88e"/>
<path d="M30.500 12.500l3.100 1.600.2 10-2.500 3.500-3.300-5.600z" fill="#b9c69f"/>
<path d="M25.500 29l1.500 23.700h3.300l-.8-23z" fill="#97a87d"/>
<path d="M20.300 30c1.500 6 1 15 .6 22.700h2.600c.5-8-.5-16-1.500-22z" fill="#b4c199"/>
<path d="M32.400 25.300l2 .2.400 9.500-.8 4-1.300-.6.500-4z" fill="#d8bda4"/>
<ellipse cx="26.800" cy="4.600" rx="3.700" ry="3.300" fill="#2a2220"/>
<ellipse cx="27.200" cy="7" rx="2.400" ry="3.600" fill="#d3ad92"/>
<path d="M24.300 2.800c-1.600 3-1.200 6-1.600 9s-1.100 6.500-.2 9.800c1.700-2.800 2.700-5.300 2.800-8.300s-.5-5 .1-8z" fill="#2d2421"/>
<path d="M29.400 3.500c1.200 2 1.300 5.500.7 8l-1.100-.5c.5-2 .4-5-.2-7z" fill="#2d2421"/>
</g></g></svg>
</div></body></html>
